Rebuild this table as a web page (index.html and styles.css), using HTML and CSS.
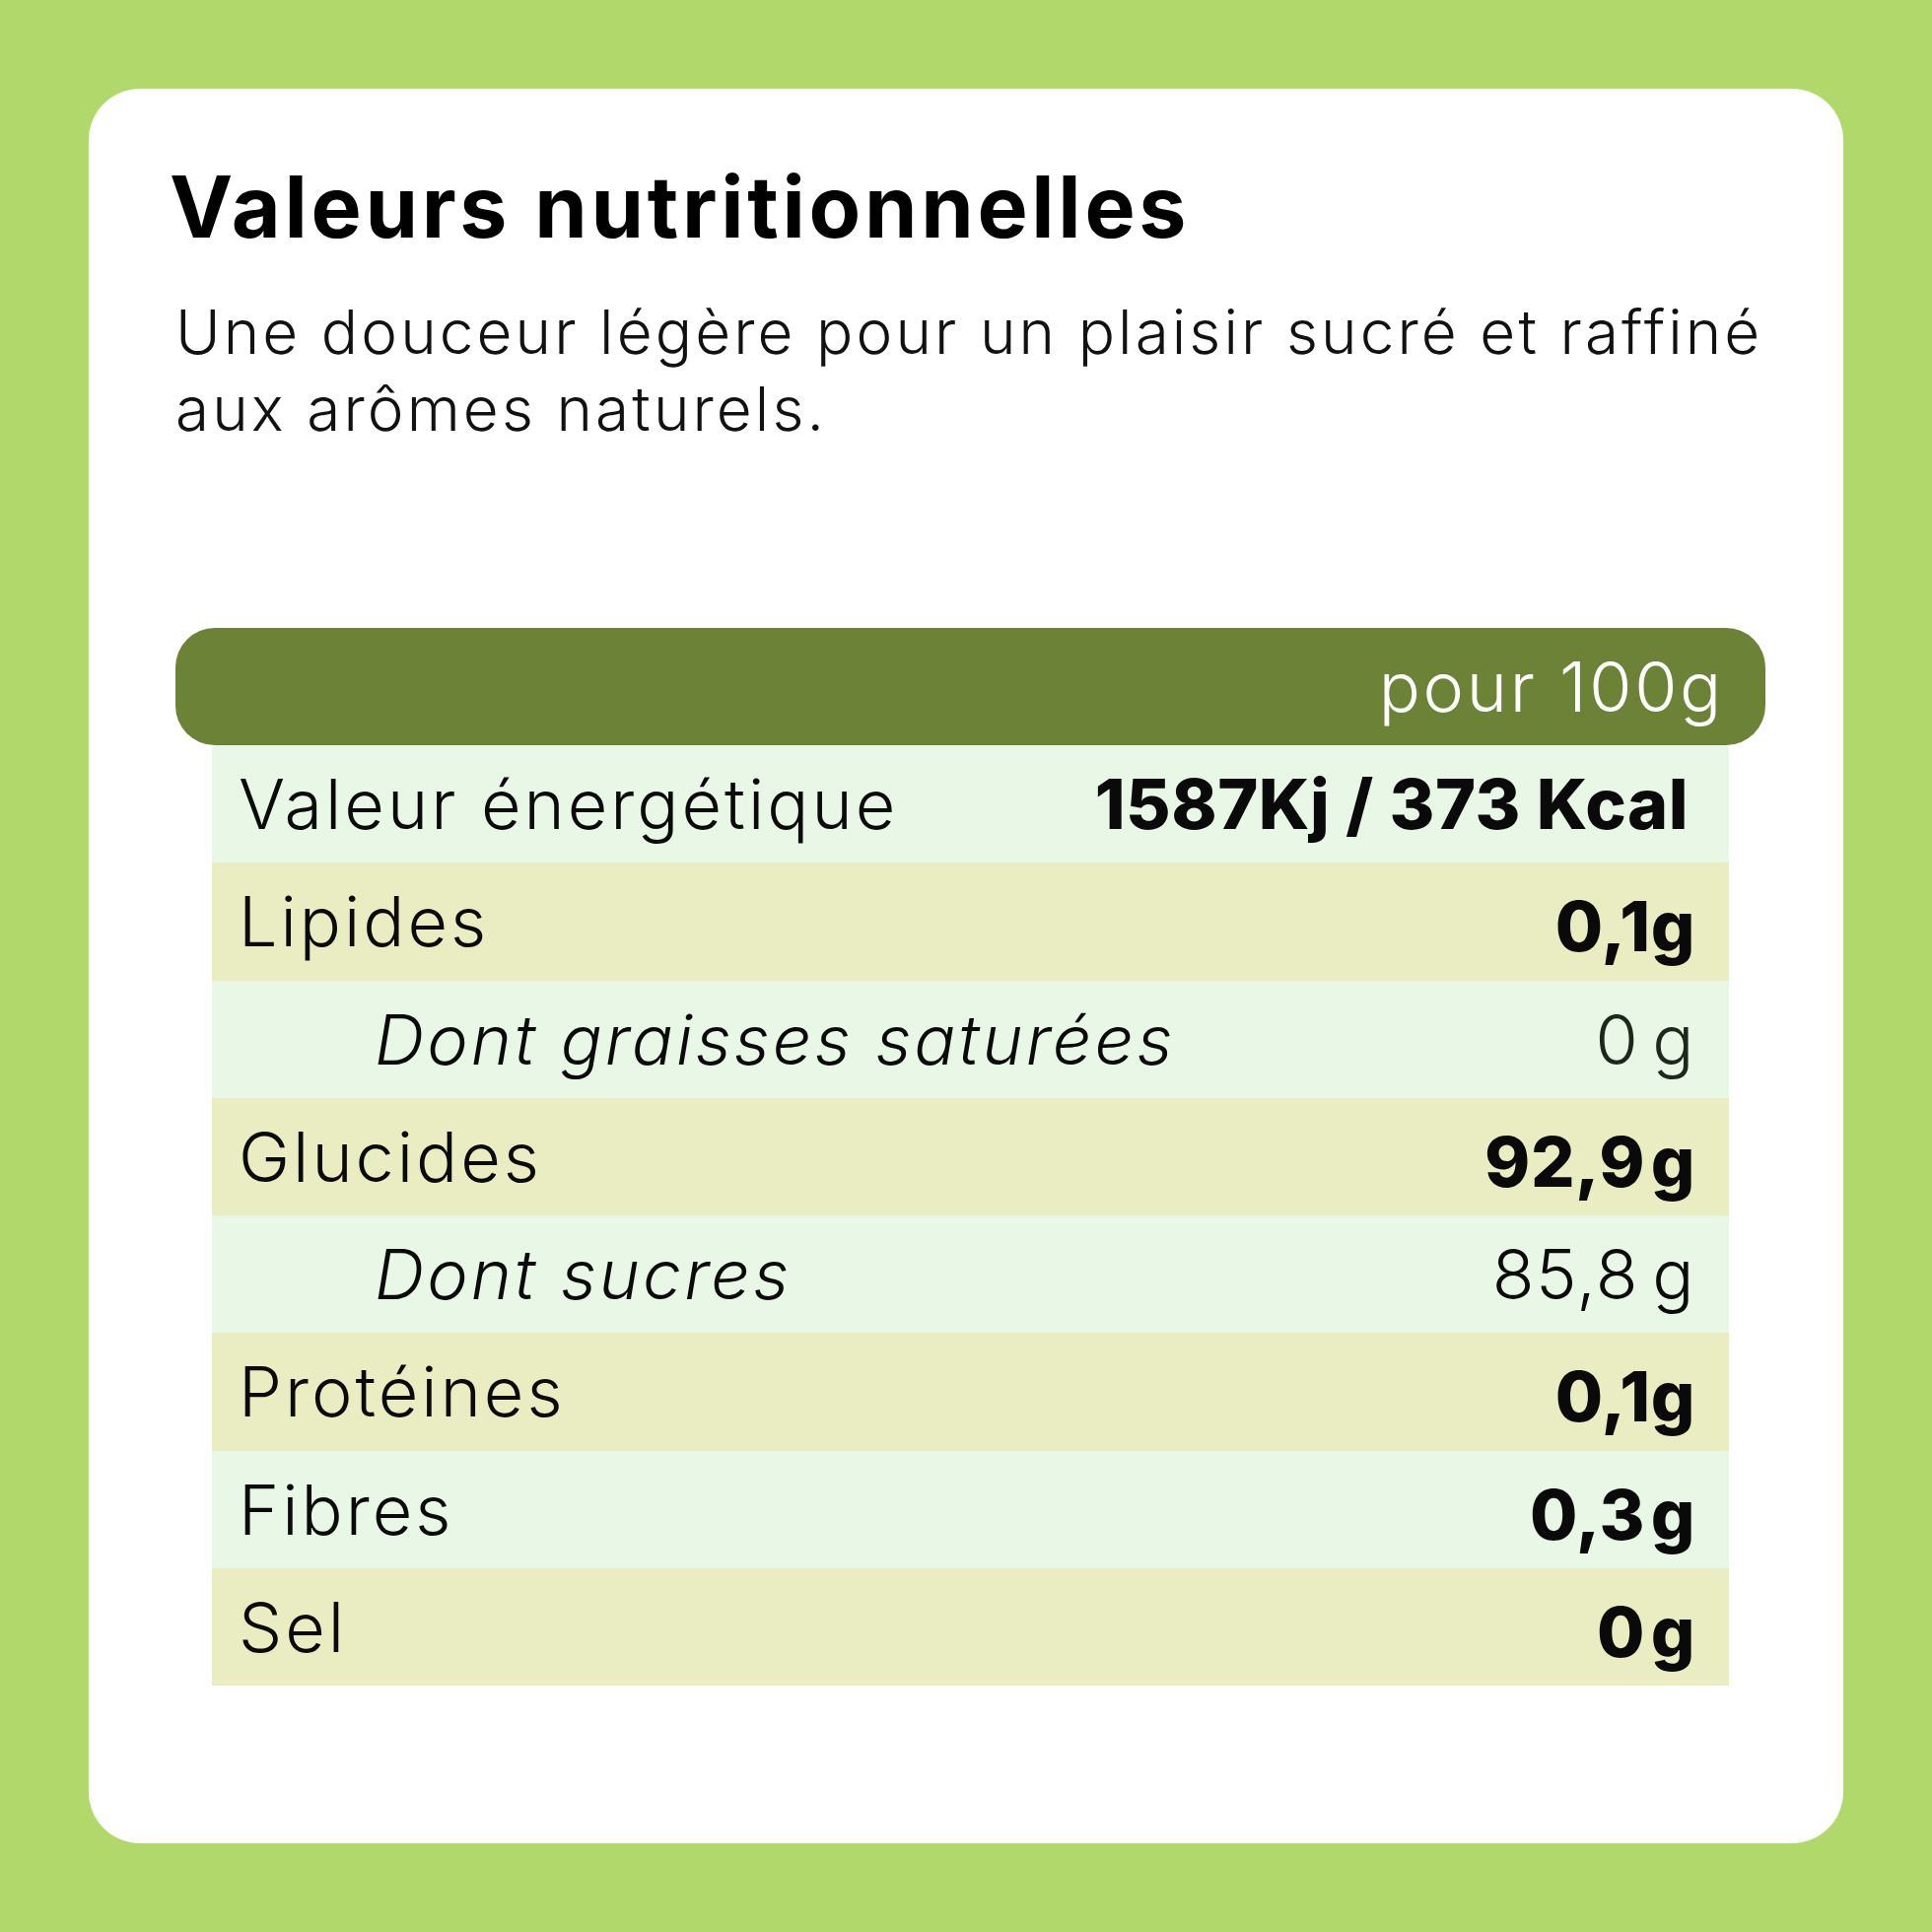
FILE: index.html
```html
<!DOCTYPE html>
<html lang="fr">
<head>
<meta charset="utf-8">
<title>Valeurs nutritionnelles</title>
<link rel="stylesheet" href="styles.css">
</head>
<body>
<main class="page">
  <section class="card">
    <h1 class="title">Valeurs nutritionnelles</h1>
    <p class="intro">Une douceur légère pour un plaisir sucré et raffiné aux arômes naturels.</p>
    <div class="table">
      <div class="table-head">pour 100g</div>
      <div class="rows">
        <div class="row row-light"><span class="label">Valeur énergétique</span><span class="value strong energy">1587Kj / 373 Kcal</span></div>
        <div class="row row-beige"><span class="label">Lipides</span><span class="value strong low">0,1g</span></div>
        <div class="row row-light"><span class="label sub">Dont graisses saturées</span><span class="value soft">0 g</span></div>
        <div class="row row-beige"><span class="label">Glucides</span><span class="value strong low">92,9 g</span></div>
        <div class="row row-light"><span class="label sub">Dont sucres</span><span class="value">85,8 g</span></div>
        <div class="row row-beige"><span class="label">Protéines</span><span class="value strong low">0,1g</span></div>
        <div class="row row-light"><span class="label">Fibres</span><span class="value strong low">0,3 g</span></div>
        <div class="row row-beige"><span class="label">Sel</span><span class="value strong low">0 g</span></div>
      </div>
    </div>
  </section>
</main>
</body>
</html>
```

FILE: styles.css
```css
* { box-sizing: border-box; }

html, body {
  margin: 0;
  padding: 0;
}

body {
  background: #b1d86a;
  font-family: "Inter", "Open Sans", "Liberation Sans", sans-serif;
  color: #0a0a0a;
}

.page {
  width: 1960px;
  height: 1960px;
  padding: 90px;
}

.card {
  width: 1780px;
  height: 1780px;
  background: #ffffff;
  border-radius: 52px;
  padding: 0 79px 0 88px;
  display: flex;
  flex-direction: column;
}

.title {
  margin: 60px 0 0 -6px;
  font-size: 86px;
  line-height: 120px;
  font-weight: 700;
  letter-spacing: 3.7px;
  color: #000;
  white-space: nowrap;
}

.intro {
  margin: 28px 0 0 0;
  font-size: 62px;
  line-height: 78px;
  font-weight: 300;
  letter-spacing: 3.1px;
  color: #111;
  max-width: 1613px;
}

.table {
  margin-top: 183px;
  display: flex;
  flex-direction: column;
}

.table-head {
  height: 119px;
  background: #6b8237;
  border-radius: 40px;
  color: #ffffff;
  font-size: 70px;
  font-weight: 300;
  letter-spacing: 2.7px;
  display: flex;
  align-items: center;
  justify-content: flex-end;
  padding-right: 42px;
}

.rows {
  margin: 0 37px;
  display: grid;
  grid-auto-rows: 119.25px;
}

.row {
  display: flex;
  align-items: center;
  justify-content: space-between;
  padding: 0 35px 0 27px;
  font-size: 70px;
  font-weight: 300;
  letter-spacing: 3px;
  white-space: nowrap;
}

.row-light { background: #e8f7e6; }
.row-beige { background: #eaedc2; }

.label.sub {
  font-style: italic;
  padding-left: 138px;
}

.value {
  letter-spacing: 1.5px;
  word-spacing: -8px;
  margin-right: -1px;
}

.value.strong {
  font-weight: 800;
  letter-spacing: 0.5px;
  word-spacing: -10px;
}

.value.strong.energy {
  word-spacing: 0;
  margin-right: 6px;
}

.value.low {
  padding-top: 10px;
}

.value.soft {
  color: #1c281c;
}
```
